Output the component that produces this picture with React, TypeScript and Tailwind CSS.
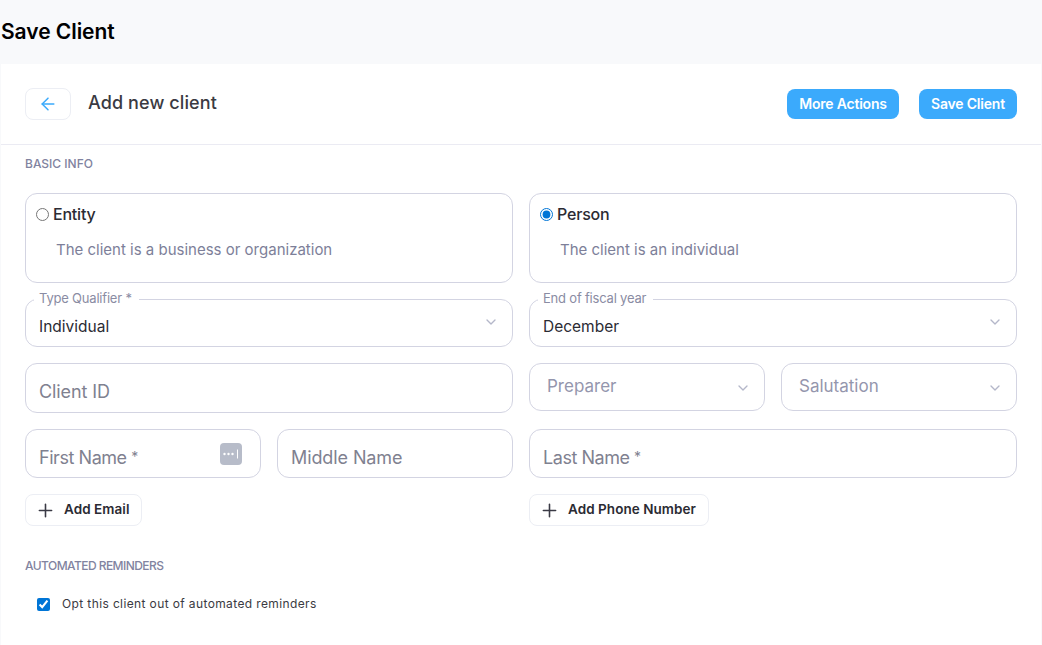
import React from 'react';
import { ArrowLeft, ChevronDown, Plus } from 'lucide-react';

const font = { fontFamily: 'Inter, "Liberation Sans", sans-serif' };

function TypeCard({ label, text, checked }: { label: string; text: string; checked?: boolean }) {
  return (
    <label className="h-[90px] border border-[#d3d4e2] rounded-xl pl-[10px] pt-[10px] block">
      <div className="flex items-center h-[20px]">
        <input type="radio" name="kind" defaultChecked={checked} className="w-[13px] h-[13px] m-0 mr-[4px] accent-[#0075d6]" />
        <span className="text-[16px] font-medium text-[#2b2b33] tracking-[-0.2px]">{label}</span>
      </div>
      <div className="text-[15px] text-[#7d7f99] ml-[20px] mt-[16px] leading-[20px]">{text}</div>
    </label>
  );
}

function LegendSelect({ legend, value }: { legend: string; value: string }) {
  return (
    <fieldset className="h-[54px] -mt-[6px] border border-[#d3d4e2] rounded-xl pl-[8px] pr-[15px]">
      <legend className="pl-[5px] pr-[7px] text-[13px] leading-[13px] text-[#8a8ca3] tracking-[-0.2px] -translate-y-[1px]">{legend}</legend>
      <div className="flex items-center justify-between mt-[11px]">
        <span className="pl-[5px] text-[15.5px] text-[#2b2b33] leading-[20px]">{value}</span>
        <ChevronDown size={16} strokeWidth={2} className="text-[#b4b7c9] -mt-[10px] -mr-[2px]" />
      </div>
    </fieldset>
  );
}

function TextField({ placeholder, star, className, children }: { placeholder: string; star?: boolean; className?: string; children?: React.ReactNode }) {
  return (
    <div className={`h-[49px] border border-[#d3d4e2] rounded-xl flex items-center justify-between pl-[13px] pr-[18px] ${className ?? ''}`}>
      <span className={`text-[18px] text-[#7f8190] mt-[7px] ${star ? 'tracking-[-0.45px]' : 'tracking-[-0.1px]'}`}>
        {placeholder}
        {star && <span className="text-[14px] align-[2px] ml-[1px]"> *</span>}
      </span>
      {children}
    </div>
  );
}

function PlainSelect({ placeholder }: { placeholder: string }) {
  return (
    <div className="h-[48px] border border-[#d3d4e2] rounded-xl flex items-center justify-between pl-[17px] pr-[13px]">
      <span className="text-[17px] text-[#9496ad] -mt-[1px]">{placeholder}</span>
      <ChevronDown size={16} strokeWidth={2} className="text-[#b4b7c9] mt-[1px]" />
    </div>
  );
}

function AddButton({ label }: { label: string }) {
  return (
    <button className="h-[32px] border border-[#eceef4] rounded-lg flex items-center pl-[9px] pr-[12px] bg-white">
      <Plus size={21} strokeWidth={1.8} className="text-[#3a3a45] mr-[8px]" />
      <span className="text-[13.5px] font-semibold text-[#2b2b33] tracking-[0.05px] -mt-[1px]">{label}</span>
    </button>
  );
}

export default function App() {
  return (
    <div className="h-[645px] w-[1042px] overflow-hidden bg-[#f8f9fb]" style={font}>
      <div className="h-[64px] flex items-center">
        <h1 className="pl-[1px] text-[21px] font-semibold text-black tracking-[-0.05px]">Save Client</h1>
      </div>

      <div className="mx-[1px] h-[581px] bg-white">
        {/* Top bar */}
        <div className="h-[81px] border-b border-[#ebebf3] flex items-center justify-between px-[24px]">
          <div className="flex items-center">
            <button className="w-[46px] h-[32px] border border-[#eceef4] rounded-lg flex items-center justify-center">
              <ArrowLeft size={20} strokeWidth={1.8} className="text-[#3baafc]" />
            </button>
            <div className="ml-[17px] text-[18px] font-medium text-[#3a3a42] tracking-[0.1px] -mt-[3px]">Add new client</div>
          </div>
          <div className="flex items-center gap-[20px]">
            <button className="h-[30px] w-[112px] pb-[2px] rounded-lg bg-[#3baafc] text-white text-[14px] font-semibold tracking-[-0.2px]">More Actions</button>
            <button className="h-[30px] w-[98px] pb-[2px] rounded-lg bg-[#3baafc] text-white text-[14px] font-semibold tracking-[-0.2px]">Save Client</button>
          </div>
        </div>

        {/* Form */}
        <div className="px-[24px]">
          <div className="mt-[12px] h-[14px] leading-[14px] text-[12px] font-medium text-[#8183a0]">BASIC INFO</div>

          <div className="mt-[22px] grid grid-cols-2 gap-[16px]">
            <TypeCard label="Entity" text="The client is a business or organization" />
            <TypeCard label="Person" text="The client is an individual" checked />
          </div>

          <div className="mt-[16px] grid grid-cols-2 gap-[16px]">
            <LegendSelect legend="Type Qualifier *" value="Individual" />
            <LegendSelect legend="End of fiscal year" value="December" />
          </div>

          <div className="mt-[16px] grid grid-cols-2 gap-[16px] items-start">
            <TextField placeholder="Client ID" className="h-[50px]" />
            <div className="grid grid-cols-2 gap-[16px]">
              <PlainSelect placeholder="Preparer" />
              <PlainSelect placeholder="Salutation" />
            </div>
          </div>

          <div className="mt-[16px] grid grid-cols-2 gap-[16px]">
            <div className="grid grid-cols-2 gap-[16px]">
              <TextField placeholder="First Name" star>
                <div className="w-[22px] h-[22px] rounded bg-[#b7bcc9] flex items-center justify-center">
                  <svg width="18" height="10" viewBox="0 0 18 10" fill="white">
                    <circle cx="2.5" cy="5" r="1.2" />
                    <circle cx="6.5" cy="5" r="1.2" />
                    <circle cx="10.5" cy="5" r="1.2" />
                    <rect x="15" y="0.5" width="1" height="9" />
                  </svg>
                </div>
              </TextField>
              <TextField placeholder="Middle Name" />
            </div>
            <TextField placeholder="Last Name" star />
          </div>

          <div className="mt-[16px] grid grid-cols-2 gap-[16px]">
            <div className="flex"><AddButton label="Add Email" /></div>
            <div className="flex"><AddButton label="Add Phone Number" /></div>
          </div>

          <div className="mt-[33px] h-[14px] leading-[14px] text-[12px] font-medium text-[#8183a0] tracking-[-0.55px]">AUTOMATED REMINDERS</div>

          <label className="mt-[22px] ml-[12px] flex items-center">
            <input type="checkbox" defaultChecked className="w-[13px] h-[13px] m-0 accent-[#0075d6]" />
            <span className="ml-[12px] text-[12px] text-[#3a3a42] tracking-[0.38px]">Opt this client out of automated reminders</span>
          </label>
        </div>
      </div>
    </div>
  );
}
